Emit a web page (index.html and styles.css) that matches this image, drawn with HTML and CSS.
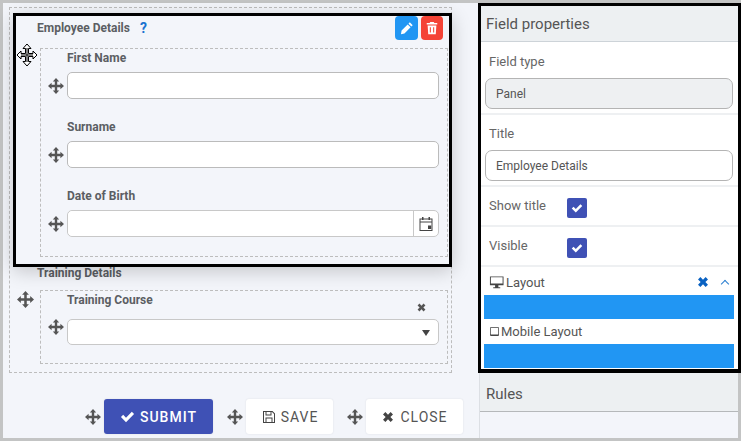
FILE: index.html
```html
<!DOCTYPE html>
<html lang="en">
<head>
    <meta charset="UTF-8">
    <meta name="viewport" content="width=device-width, initial-scale=1.0">
    <title>Form Designer</title>
    <link rel="stylesheet" href="styles.css">
</head>
<body>
    <svg class="sprite" xmlns="http://www.w3.org/2000/svg">
        <symbol id="i-move" viewBox="0 0 16 16">
            <path d="M8 0l3.2 3.6H9.2V6.8h3.2V4.8L16 8l-3.6 3.2V9.2H9.2v3.2h2L8 16l-3.2-3.6h2V9.2H3.6v2L0 8l3.6-3.2v2h3.2V3.6h-2z"/>
        </symbol>
        <symbol id="i-check" viewBox="0 0 16 16">
            <path d="M1 8.6l2.4-2.4 3 3L12.6 3 15 5.400 6.400 14z"/>
        </symbol>
        <symbol id="i-times" viewBox="0 0 16 16">
            <path d="M2.300 5l2.700-2.700L8 5.300l3-3L13.700 5l-3 3 3 3-2.700 2.700-3-3-3 3L2.300 11l3-3z"/>
        </symbol>
        <symbol id="i-pencil" viewBox="0 0 16 16">
            <path d="M11.200 1.500l3.300 3.300-1.500 1.500-3.300-3.300zM8.800 3.900l3.300 3.300-7 7-4 .8.700-4.100z"/>
        </symbol>
        <symbol id="i-trash" viewBox="0 0 16 16">
            <path d="M6 1h4l.7 1.300H14v1.700H2V2.300h3.300zM3 5h10l-.7 10H3.700zm2.500 2v6h1.200V7zm3.800 0v6h1.200V7z"/>
        </symbol>
        <symbol id="i-calendar" viewBox="0 0 16 16">
            <path d="M1.500 2.500h13v12.500h-13zm1 4v7.500h11V6.500zm0-3v2h11v-2z"/>
            <path d="M4 1h1.500v3H4zm6.500 0H12v3h-1.500zM10 9.500h3.200V13H10z"/>
        </symbol>
        <symbol id="i-save" viewBox="0 0 16 16">
            <path d="M2 2h9.500L14 4.500V14H2zm1 1v10h1.500V8.500h7V13H13V5l-2-2h-.5v3.500h-6V3zm2.500 0v2.500h4V3zm0 6.500V13h5V9.500z"/>
        </symbol>
        <symbol id="i-monitor" viewBox="0 0 16 16">
            <path d="M1 1.500h14.500V11H10v2h2v1H4.500v-1h2v-2H1zm1 1V9h12.500V2.500z"/>
        </symbol>
        <symbol id="i-tablet" viewBox="0 0 12 14">
            <path d="M1.500 1h9A1.500 1.500 0 0 1 12 2.500v9a1.500 1.500 0 0 1-1.500 1.500h-9A1.500 1.500 0 0 1 0 11.500v-9A1.500 1.500 0 0 1 1.500 1zM1 2v9h10V2z"/>
        </symbol>
    </svg>

    <div class="app">
        <main class="canvas">
            <div class="form-area">
                <section class="panel">
                    <div class="panel-head">
                        <span class="panel-title">Employee Details</span>
                        <span class="help">?</span>
                        <div class="panel-actions">
                            <button class="action action-edit" type="button"><svg class="icon"><use href="#i-pencil"/></svg></button>
                            <button class="action action-delete" type="button"><svg class="icon"><use href="#i-trash"/></svg></button>
                        </div>
                    </div>
                    <div class="panel-body">
                        <div class="panel-handle">
                            <svg class="drag-cursor" viewBox="0 0 22 24">
                                <path d="M11 1l4 4.500h-2.500V10.500H17V8l4 4-4 4v-2.500H12.500v5H15L11 23l-4-4.500h2.500v-5H5V16l-4-4 4-4v2.500H9.500V5.500H7z"/>
                                <path d="M11 5v14M5 12h12"/>
                            </svg>
                        </div>
                        <div class="dropzone">
                            <div class="field">
                                <label class="field-label">First Name</label>
                                <div class="field-row">
                                    <svg class="move"><use href="#i-move"/></svg>
                                    <input class="text-input" type="text">
                                </div>
                            </div>
                            <div class="field">
                                <label class="field-label">Surname</label>
                                <div class="field-row">
                                    <svg class="move"><use href="#i-move"/></svg>
                                    <input class="text-input" type="text">
                                </div>
                            </div>
                            <div class="field">
                                <label class="field-label">Date of Birth</label>
                                <div class="field-row">
                                    <svg class="move"><use href="#i-move"/></svg>
                                    <div class="date-input">
                                        <input type="text">
                                        <span class="date-btn"><svg class="icon-cal"><use href="#i-calendar"/></svg></span>
                                    </div>
                                </div>
                            </div>
                        </div>
                    </div>
                </section>

                <section class="panel panel-training">
                    <div class="panel-head panel-head-small">
                        <span class="panel-title">Training Details</span>
                    </div>
                    <div class="panel-body">
                        <div class="panel-handle"><svg class="move move-panel"><use href="#i-move"/></svg></div>
                        <div class="dropzone dropzone-training">
                            <div class="field field-course">
                                <div class="field-label-row">
                                    <label class="field-label">Training Course</label>
                                    <svg class="remove"><use href="#i-times"/></svg>
                                </div>
                                <div class="field-row">
                                    <svg class="move"><use href="#i-move"/></svg>
                                    <div class="select-input"><span class="caret"></span></div>
                                </div>
                            </div>
                        </div>
                    </div>
                </section>
            </div>

            <div class="form-buttons">
                <svg class="move"><use href="#i-move"/></svg>
                <button class="btn btn-submit" type="button"><svg class="btn-icon"><use href="#i-check"/></svg>SUBMIT</button>
                <svg class="move"><use href="#i-move"/></svg>
                <button class="btn btn-save" type="button"><svg class="btn-icon"><use href="#i-save"/></svg>SAVE</button>
                <svg class="move"><use href="#i-move"/></svg>
                <button class="btn btn-close" type="button"><svg class="btn-icon"><use href="#i-times"/></svg>CLOSE</button>
            </div>
        </main>

        <aside class="sidebar">
            <h3 class="side-head">Field properties</h3>
            <div class="prop prop-type">
                <label class="prop-label">Field type</label>
                <input class="prop-input prop-readonly" type="text" value="Panel" readonly>
            </div>
            <div class="prop prop-title">
                <label class="prop-label">Title</label>
                <input class="prop-input" type="text" value="Employee Details">
            </div>
            <div class="prop prop-check">
                <label class="prop-label">Show title</label>
                <span class="checkbox"><svg class="check-mark"><use href="#i-check"/></svg></span>
            </div>
            <div class="prop prop-check">
                <label class="prop-label">Visible</label>
                <span class="checkbox"><svg class="check-mark"><use href="#i-check"/></svg></span>
            </div>
            <div class="layouts">
                <div class="layout-head">
                    <svg class="layout-icon"><use href="#i-monitor"/></svg>
                    <span>Layout</span>
                    <svg class="layout-clear"><use href="#i-times"/></svg>
                    <span class="chevron"></span>
                </div>
                <div class="layout-bar"></div>
                <div class="layout-head layout-head-mobile">
                    <svg class="layout-icon-small"><use href="#i-tablet"/></svg>
                    <span>Mobile Layout</span>
                </div>
                <div class="layout-bar"></div>
            </div>
            <h3 class="side-head side-head-rules">Rules</h3>
        </aside>

        <div class="highlight highlight-panel"></div>
        <div class="highlight highlight-side"></div>
    </div>
</body>
</html>
```

FILE: styles.css
```css
/* Global Styles */

* {
    margin: 0;
    padding: 0;
    box-sizing: border-box;
}

body {
    font-family: 'Roboto', 'Liberation Sans', sans-serif;
    color: #555;
    overflow: hidden;
}

.sprite {
    display: none;
}

.app {
    position: relative;
    display: flex;
    width: 741px;
    height: 441px;
    background-color: #f3f5fa;
    border: 3px solid #c3c4c4;
}

/* Form Canvas */

.canvas {
    width: 476px;
    flex: none;
    padding: 4px 0 0 6px;
}

.form-area {
    width: 443px;
    height: 366px;
    border: 1px dashed #bdbdbd;
}

.panel-head {
    display: flex;
    align-items: center;
    height: 40px;
    padding: 0 8px 0 27px;
}

.panel-head-small {
    height: 18px;
    margin: 7px 0 8px;
}

.panel-title {
    font-size: 12px;
    font-weight: 700;
    color: #5b5e63;
}

.help {
    margin: -1px 0 0 10px;
    font-size: 14px;
    font-weight: 700;
    color: #1a73d0;
}

.panel-actions {
    display: flex;
    gap: 3px;
    margin-left: auto;
}

.action {
    display: flex;
    align-items: center;
    justify-content: center;
    width: 23px;
    height: 24px;
    border: none;
    border-radius: 4px;
}

.action-edit {
    background-color: #2196f3;
}

.action-delete {
    width: 22px;
    background-color: #f44336;
}

.icon {
    width: 14px;
    height: 14px;
    fill: #fff;
}

.panel-body {
    display: flex;
    gap: 6px;
    padding-left: 7px;
}

.panel-handle {
    width: 17px;
    flex: none;
}

.drag-cursor {
    display: block;
    width: 22px;
    height: 24px;
    margin: -5px 0 0 -1px;
    fill: #fff;
    stroke: #000;
    stroke-width: 1;
}

.move {
    width: 16px;
    height: 16px;
    flex: none;
    fill: #555;
}

.move-panel {
    display: block;
    width: 17px;
    height: 17px;
    margin-top: 1px;
}

.dropzone {
    width: 408px;
    height: 209px;
    padding: 0 8px 0 7px;
    border: 1px dashed #bdbdbd;
}

.dropzone-training {
    height: 74px;
}

.field {
    height: 69px;
}

.field-label {
    display: block;
    height: 18px;
    margin: 0 0 5px 19px;
    font-size: 12px;
    font-weight: 700;
    line-height: 18px;
    color: #5b5e63;
}

.field-label-row {
    display: flex;
    justify-content: space-between;
    height: 28px;
}

.remove {
    width: 11px;
    height: 11px;
    margin: 11px 12px 0 0;
    fill: #555;
}

.field-row {
    display: flex;
    align-items: center;
    gap: 3px;
}

.field-course .move {
    align-self: flex-start;
}

.text-input,
.date-input,
.select-input {
    width: 372px;
    height: 27px;
    background-color: #fff;
    border: 1px solid #bbb;
    border-radius: 5px;
}

.date-input {
    display: flex;
    border-color: #c8c8c8;
}

.date-input input {
    flex: 1;
    min-width: 0;
    border: none;
    border-radius: 5px;
}

.date-btn {
    display: flex;
    align-items: center;
    justify-content: center;
    width: 25px;
    border-left: 1px solid #c8c8c8;
}

.icon-cal {
    width: 16px;
    height: 16px;
    fill: #444;
}

.select-input {
    position: relative;
    height: 26px;
    border-color: #c8c8c8;
}

.caret {
    position: absolute;
    top: 10px;
    right: 8px;
    border-top: 6px solid #444;
    border-left: 4px solid transparent;
    border-right: 4px solid transparent;
}

/* Form Buttons */

.form-buttons {
    display: flex;
    align-items: center;
    height: 35px;
    margin-top: 26px;
    padding-left: 76px;
}

.btn {
    display: flex;
    align-items: center;
    justify-content: center;
    height: 35px;
    margin: 0 14px 0 3px;
    font-family: inherit;
    font-size: 14px;
    letter-spacing: 1px;
    color: #555;
    background-color: #fff;
    border: none;
    border-radius: 3px;
    box-shadow: 0 0 2px rgba(0, 0, 0, 0.1);
}

.btn-icon {
    width: 14px;
    height: 14px;
    margin-right: 5px;
    fill: #444;
}

.btn-submit {
    width: 109px;
    font-weight: 500;
    color: #fff;
    background-color: #3f51b5;
}

.btn-submit .btn-icon {
    width: 15px;
    height: 15px;
    fill: #fff;
}

.btn-save {
    width: 87px;
}

.btn-save .btn-icon {
    width: 16px;
    height: 16px;
    margin-right: 4px;
}

.btn-close {
    width: 97px;
}

/* Sidebar */

.sidebar {
    display: flex;
    flex-direction: column;
    width: 259px;
    flex: none;
    border-left: 1px solid #dcdfe4;
}

.side-head {
    height: 39px;
    padding: 12px 0 0 6px;
    font-size: 15px;
    font-weight: 400;
    line-height: 18px;
    color: #555;
    background-color: #edf0f2;
    border-bottom: 1px solid #cdd3d8;
}

.side-head-rules {
    padding-top: 12px;
    border-bottom-color: #b5b8ba;
}

.prop {
    padding: 0 5px;
    background-color: #fff;
    border-bottom: 2px solid #eef0f2;
}

.prop-type {
    height: 73px;
    padding-top: 11px;
}

.prop-title {
    height: 72px;
    padding-top: 10px;
}

.prop-label {
    display: block;
    height: 18px;
    margin-bottom: 7px;
    padding-left: 4px;
    font-size: 13px;
    line-height: 18px;
    color: #666;
}

.prop-input {
    display: block;
    width: 248px;
    height: 31px;
    padding: 0 10px;
    font-family: inherit;
    font-size: 12px;
    color: #555;
    background-color: #fff;
    border: 1px solid #b4b4b4;
    border-radius: 7px;
}

.prop-readonly {
    background-color: #eef0f2;
}

.prop-check {
    display: flex;
    align-items: center;
    height: 40px;
}

.prop-check .prop-label {
    width: 82px;
    margin: 0 0 1px;
}

.checkbox {
    display: flex;
    align-items: center;
    justify-content: center;
    width: 20px;
    height: 20px;
    margin-top: 4px;
    background-color: #3f51b5;
    border-radius: 2px;
}

.check-mark {
    width: 12px;
    height: 12px;
    fill: #fff;
}

.layouts {
    height: 106px;
    padding: 0 4px;
    background-color: #fff;
}

.layout-head {
    display: flex;
    align-items: center;
    gap: 2px;
    height: 28px;
    padding: 2px 5px 0;
    font-size: 13px;
    color: #555;
}

.layout-head-mobile {
    height: 25px;
    padding-top: 0;
}

.layout-icon {
    width: 15px;
    height: 15px;
    fill: #444;
}

.layout-icon-small {
    width: 9px;
    height: 11px;
    margin-left: 1px;
    fill: #444;
}

.layout-clear {
    width: 14px;
    height: 14px;
    margin-left: auto;
    fill: #0a62c2;
}

.chevron {
    width: 6px;
    height: 6px;
    margin: 4px 1px 0 10px;
    border-top: 1px solid #2a7fd0;
    border-left: 1px solid #2a7fd0;
    transform: rotate(45deg);
}

.layout-bar {
    height: 24px;
    background-color: #2196f3;
}

/* Highlight boxes drawn over the designer */

.highlight {
    position: absolute;
    border: 3px solid #000;
    pointer-events: none;
}

.highlight-panel {
    top: 10px;
    left: 10px;
    width: 439px;
    height: 254px;
    box-shadow: 0 4px 18px rgba(0, 0, 0, 0.2);
}

.highlight-side {
    top: 0;
    left: 475px;
    width: 263px;
    height: 370px;
    border-bottom-width: 4px;
}
```
